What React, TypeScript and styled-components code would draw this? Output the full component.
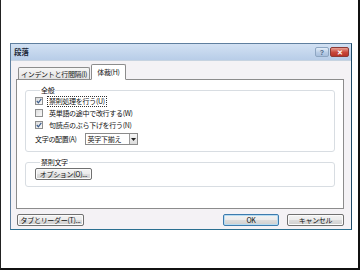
import React from "react";
import styled, { createGlobalStyle } from "styled-components";

const Global = createGlobalStyle`
  html, body { margin: 0; padding: 0; background: #fff; }
  body { font-family: "Noto Sans CJK JP", "Liberation Sans", sans-serif; }
`;

const Frame = styled.div`
  box-sizing: border-box;
  width: 360px;
  height: 270px;
  background: #fff;
  border-right: 2px solid #111;
  border-bottom: 2px solid #111;
  border-left: 1px solid #222;
  padding: 43px 0 0 9px;
  overflow: hidden;
`;

const Dialog = styled.div`
  box-sizing: border-box;
  width: 342px;
  height: 187px;
  background: #f4f2f5;
  border: 1px solid #5f7f9f;
  border-right-color: #1c4866;
  border-bottom-color: #2a6f90;
  display: flex;
  flex-direction: column;
`;

const TitleBar = styled.div`
  height: 16px;
  flex: none;
  background: linear-gradient(#d2e1f3, #b8cde8);
  display: flex;
  align-items: center;
  padding: 0 2px 0 3px;
  border-bottom: 1px solid #c7d3e0;
`;

const Title = styled.span`
  flex: 1;
  font-size: 7.5px;
  font-weight: bold;
  color: #1e2a3a;
  line-height: 1;
`;

const CapButton = styled.div<{ $red?: boolean }>`
  box-sizing: border-box;
  width: ${(p) => (p.$red ? 19 : 14)}px;
  height: 10px;
  margin-left: 1px;
  border: 1px solid ${(p) => (p.$red ? "#8a3a36" : "#8ea6c2")};
  border-radius: 2px;
  background: ${(p) =>
    p.$red
      ? "linear-gradient(#e8a093, #c8463a 55%, #b83428)"
      : "linear-gradient(#e4eef9, #b9cde6 55%, #a8bfdc)"};
  display: flex;
  align-items: center;
  justify-content: center;
  font-family: "Liberation Sans", sans-serif;
  font-weight: bold;
  font-size: 7px;
  line-height: 1;
  color: ${(p) => (p.$red ? "#fff" : "#4d6584")};
`;

const Body = styled.div`
  flex: 1;
  display: flex;
  flex-direction: column;
  padding: 2px 7px 0 5px;
`;

const TabRow = styled.div`
  display: flex;
  align-items: flex-end;
  padding-left: 2px;
  height: 16px;
  position: relative;
  z-index: 1;
`;

const Tab = styled.div<{ $active?: boolean }>`
  box-sizing: border-box;
  height: ${(p) => (p.$active ? 16 : 12)}px;
  padding: 0 ${(p) => (p.$active ? 5 : 2)}px;
  margin-left: ${(p) => (p.$active ? 1 : 0)}px;
  border: 1px solid #8c8c8c;
  border-bottom: ${(p) => (p.$active ? "1px solid #fff" : "none")};
  border-radius: 2px 2px 0 0;
  background: ${(p) => (p.$active ? "#fff" : "linear-gradient(#f6f6f6, #e3e3e3)")};
  font-size: 7px;
  letter-spacing: -0.3px;
  color: #111;
  display: flex;
  align-items: center;
  margin-bottom: ${(p) => (p.$active ? -1 : 0)}px;
  white-space: nowrap;
`;

const Panel = styled.div`
  box-sizing: border-box;
  height: 130px;
  background: #fff;
  border: 1px solid #8c8c8c;
  padding: 5px 8px 0 8px;
  display: flex;
  flex-direction: column;
  gap: 5px;
`;

const Group = styled.fieldset<{ $h: number }>`
  box-sizing: border-box;
  margin: 0;
  height: ${(p) => p.$h}px;
  border: 1px solid #d8dde2;
  border-radius: 3px;
  padding: 0 0 0 9px;
  display: flex;
  flex-direction: column;
`;

const Legend = styled.legend`
  font-size: 7px;
  letter-spacing: -0.3px;
  color: #111;
  padding: 0 1px;
  margin-left: 5px;
  line-height: 10px;
`;

const Row = styled.div<{ $h?: number }>`
  display: flex;
  align-items: center;
  height: ${(p) => p.$h ?? 12}px;
  font-size: 7px;
  letter-spacing: -0.3px;
  color: #111;
  white-space: nowrap;
`;

const Box = styled.span`
  box-sizing: border-box;
  width: 8px;
  height: 8px;
  border: 1px solid #8e8f8f;
  background: linear-gradient(135deg, #dcdcdc, #fafafa);
  margin-right: 4px;
  display: inline-flex;
  align-items: center;
  justify-content: center;
`;

const Label = styled.span<{ $focus?: boolean }>`
  padding: 0 1px;
  line-height: 9px;
  border: 1px ${(p) => (p.$focus ? "dotted #333" : "solid transparent")};
`;

const Check = ({ on }: { on?: boolean }) => (
  <Box>
    {on && (
      <svg width="6" height="6" viewBox="0 0 6 6">
        <path d="M0.8 3 L2.4 4.8 L5.3 0.9" fill="none" stroke="#3c5d8c" strokeWidth="1.2" />
      </svg>
    )}
  </Box>
);

const AlignRow = styled(Row)`
  height: 14px;
  padding-top: 1px;
  gap: 8px;
`;

const Combo = styled.div`
  box-sizing: border-box;
  height: 12px;
  width: 53px;
  border: 1px solid #8b8b8b;
  display: flex;
  align-items: stretch;
  background: #fff;
`;

const ComboText = styled.span`
  flex: 1;
  font-size: 7px;
  line-height: 10px;
  padding-left: 2px;
`;

const ComboBtn = styled.span`
  width: 7px;
  border-left: 1px solid #9a9a9a;
  background: linear-gradient(#f7f7f7, #dcdcdc);
  display: flex;
  align-items: center;
  justify-content: center;
`;

const Button = styled.div<{ $w: number; $default?: boolean }>`
  box-sizing: border-box;
  width: ${(p) => p.$w}px;
  height: 12px;
  border: 1px solid ${(p) => (p.$default ? "#3d7bad" : "#707070")};
  border-radius: 2px;
  background: linear-gradient(#f3f3f3 0%, #ebebeb 50%, #dddddd 51%, #cfcfcf 100%);
  box-shadow: inset 0 0 0 1px ${(p) => (p.$default ? "#b6dcf2" : "#fbfbfb")};
  font-size: 7px;
  letter-spacing: -0.3px;
  color: #111;
  display: flex;
  align-items: center;
  justify-content: center;
  white-space: nowrap;
  line-height: 1;
`;

const Footer = styled.div`
  display: flex;
  align-items: center;
  padding: 5px 0 0 1px;
  gap: 8px;
`;

const Spacer = styled.div`
  flex: 1;
`;

export default function App() {
  return (
    <>
      <Global />
      <Frame>
        <Dialog>
          <TitleBar>
            <Title>段落</Title>
            <CapButton>?</CapButton>
            <CapButton $red>✕</CapButton>
          </TitleBar>
          <Body>
            <TabRow>
              <Tab>インデントと行間隔(I)</Tab>
              <Tab $active>体裁(H)</Tab>
            </TabRow>
            <Panel>
              <Group $h={67}>
                <Legend>全般</Legend>
                <Row>
                  <Check on />
                  <Label $focus>禁則処理を行う(U)</Label>
                </Row>
                <Row>
                  <Check />
                  <Label>英単語の途中で改行する(W)</Label>
                </Row>
                <Row>
                  <Check on />
                  <Label>句読点のぶら下げを行う(N)</Label>
                </Row>
                <AlignRow>
                  <span>文字の配置(A)</span>
                  <Combo>
                    <ComboText>英字下揃え</ComboText>
                    <ComboBtn>
                      <svg width="5" height="3" viewBox="0 0 5 3">
                        <path d="M0 0 H5 L2.5 3 Z" fill="#222" />
                      </svg>
                    </ComboBtn>
                  </Combo>
                </AlignRow>
              </Group>
              <Group $h={30}>
                <Legend>禁則文字</Legend>
                <Row $h={14}>
                  <Button $w={57}>オプション(O)...</Button>
                </Row>
              </Group>
            </Panel>
            <Footer>
              <Button $w={67}>タブとリーダー(T)...</Button>
              <Spacer />
              <Button $w={56} $default>OK</Button>
              <Button $w={57}>キャンセル</Button>
            </Footer>
          </Body>
        </Dialog>
      </Frame>
    </>
  );
}
